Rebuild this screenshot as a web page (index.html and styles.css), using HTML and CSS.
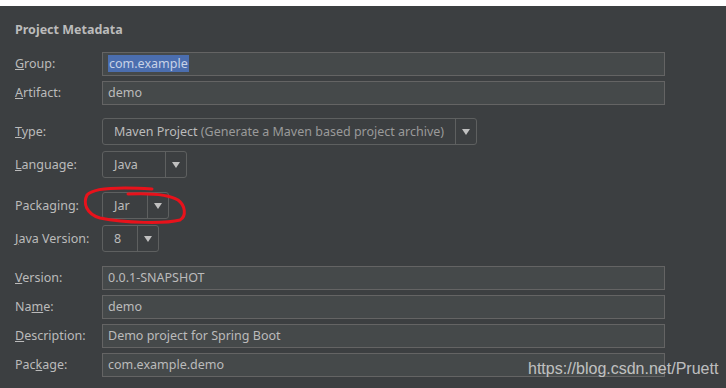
FILE: index.html
```html
<!DOCTYPE html>
<html lang="en">

<head>
    <meta charset="UTF-8">
    <title>Project Metadata</title>
    <link rel="stylesheet" href="styles.css">
</head>

<body>
    <div class="panel">
        <h3 class="title">Project Metadata</h3>

        <div class="group">
            <div class="row">
                <label><u>G</u>roup:</label>
                <div class="field"><span class="selected">com.example</span></div>
            </div>
            <div class="row">
                <label><u>A</u>rtifact:</label>
                <div class="field">demo</div>
            </div>
        </div>

        <div class="group combos">
            <div class="row">
                <label><u>T</u>ype:</label>
                <div class="combo combo-type">
                    <span class="value">Maven Project <span class="hint">(Generate a Maven based project archive)</span></span>
                    <span class="arrow"></span>
                </div>
            </div>
            <div class="row">
                <label><u>L</u>anguage:</label>
                <div class="combo combo-lang">
                    <span class="value">Java</span>
                    <span class="arrow"></span>
                </div>
            </div>
        </div>

        <div class="group combos">
            <div class="row">
                <label>Packaging:</label>
                <div class="combo combo-pack">
                    <span class="value">Jar</span>
                    <span class="arrow"></span>
                </div>
            </div>
            <div class="row">
                <label><u>J</u>ava Version:</label>
                <div class="combo combo-java">
                    <span class="value">8</span>
                    <span class="arrow"></span>
                </div>
            </div>
        </div>

        <div class="group">
            <div class="row">
                <label><u>V</u>ersion:</label>
                <div class="field">0.0.1-SNAPSHOT</div>
            </div>
            <div class="row">
                <label>Na<u>m</u>e:</label>
                <div class="field">demo</div>
            </div>
            <div class="row">
                <label><u>D</u>escription:</label>
                <div class="field">Demo project for Spring Boot</div>
            </div>
            <div class="row">
                <label>Pac<u>k</u>age:</label>
                <div class="field">com.example.demo</div>
            </div>
        </div>

        <!-- hand drawn mark -->
        <svg class="mark" width="726" height="388" viewBox="0 0 726 388">
            <path d="M152 189 C120 187 93 188 87 195 C83 203 86 214 100 218 C125 223 165 224 180 220 C187 216 185 205 178 200 C170 195 150 193 128 194" fill="none" stroke="#e8121b" stroke-width="3" stroke-linecap="round"/>
        </svg>

        <div class="watermark">https://blog.csdn.net/Pruett</div>
    </div>
</body>

</html>
```

FILE: styles.css
```css
/* Panel */

body {
    margin: 0;
    padding: 0;
    background: #ffffff;
    font-family: 'Noto Sans', 'Open Sans', sans-serif;
    font-size: 12.5px;
    color: #bbbbbb;
}

.panel {
    position: relative;
    margin-top: 6px;
    height: 382px;
    background: #3c3f41;
    padding: 15px 0 0 15px;
    box-sizing: border-box;
    overflow: hidden;
}

.title {
    margin: 0 0 13px 0;
    font-size: 12.5px;
    line-height: 18px;
    font-weight: bold;
    color: #bbbbbb;
}

.group {
    display: flex;
    flex-direction: column;
    gap: 5px;
    margin-bottom: 13px;
}

.group.combos {
    gap: 6px;
    margin-bottom: 14px;
}

.row {
    display: flex;
    align-items: center;
}

label {
    width: 87px;
    flex: none;
    line-height: 18px;
}

/* Text fields */

.field {
    width: 563px;
    height: 24px;
    box-sizing: border-box;
    border: 1px solid #646464;
    background: #45494a;
    padding: 0 5px;
    line-height: 22px;
    white-space: nowrap;
}

.selected {
    background: #4b6eaf;
    color: #c8d2e6;
    padding: 0 1px;
}

/* Combo boxes */

.combo {
    display: flex;
    height: 27px;
    box-sizing: border-box;
    border: 1px solid #5e6060;
    border-radius: 3px;
    background: #3c3f41;
}

.combo .value {
    flex: 1;
    padding-left: 11px;
    line-height: 25px;
    white-space: nowrap;
    overflow: hidden;
}

.combo .hint {
    color: #9a9a9a;
}

.combo .arrow {
    width: 20px;
    flex: none;
    border-left: 1px solid #5e6060;
    position: relative;
}

.combo .arrow::after {
    content: '';
    position: absolute;
    left: 6px;
    top: 10px;
    border-left: 4px solid transparent;
    border-right: 4px solid transparent;
    border-top: 6px solid #c0c0c0;
}

.combo-type { width: 375px; }
.combo-lang { width: 85px; }
.combo-pack { width: 67px; }
.combo-java { width: 57px; }

/* Overlays */

.mark {
    position: absolute;
    left: 0;
    top: -6px;
    pointer-events: none;
}

.watermark {
    position: absolute;
    left: 528px;
    top: 354px;
    font-family: 'Liberation Sans', Arial, sans-serif;
    font-size: 16px;
    white-space: nowrap;
    color: rgba(225, 225, 225, 0.8);
}
```
